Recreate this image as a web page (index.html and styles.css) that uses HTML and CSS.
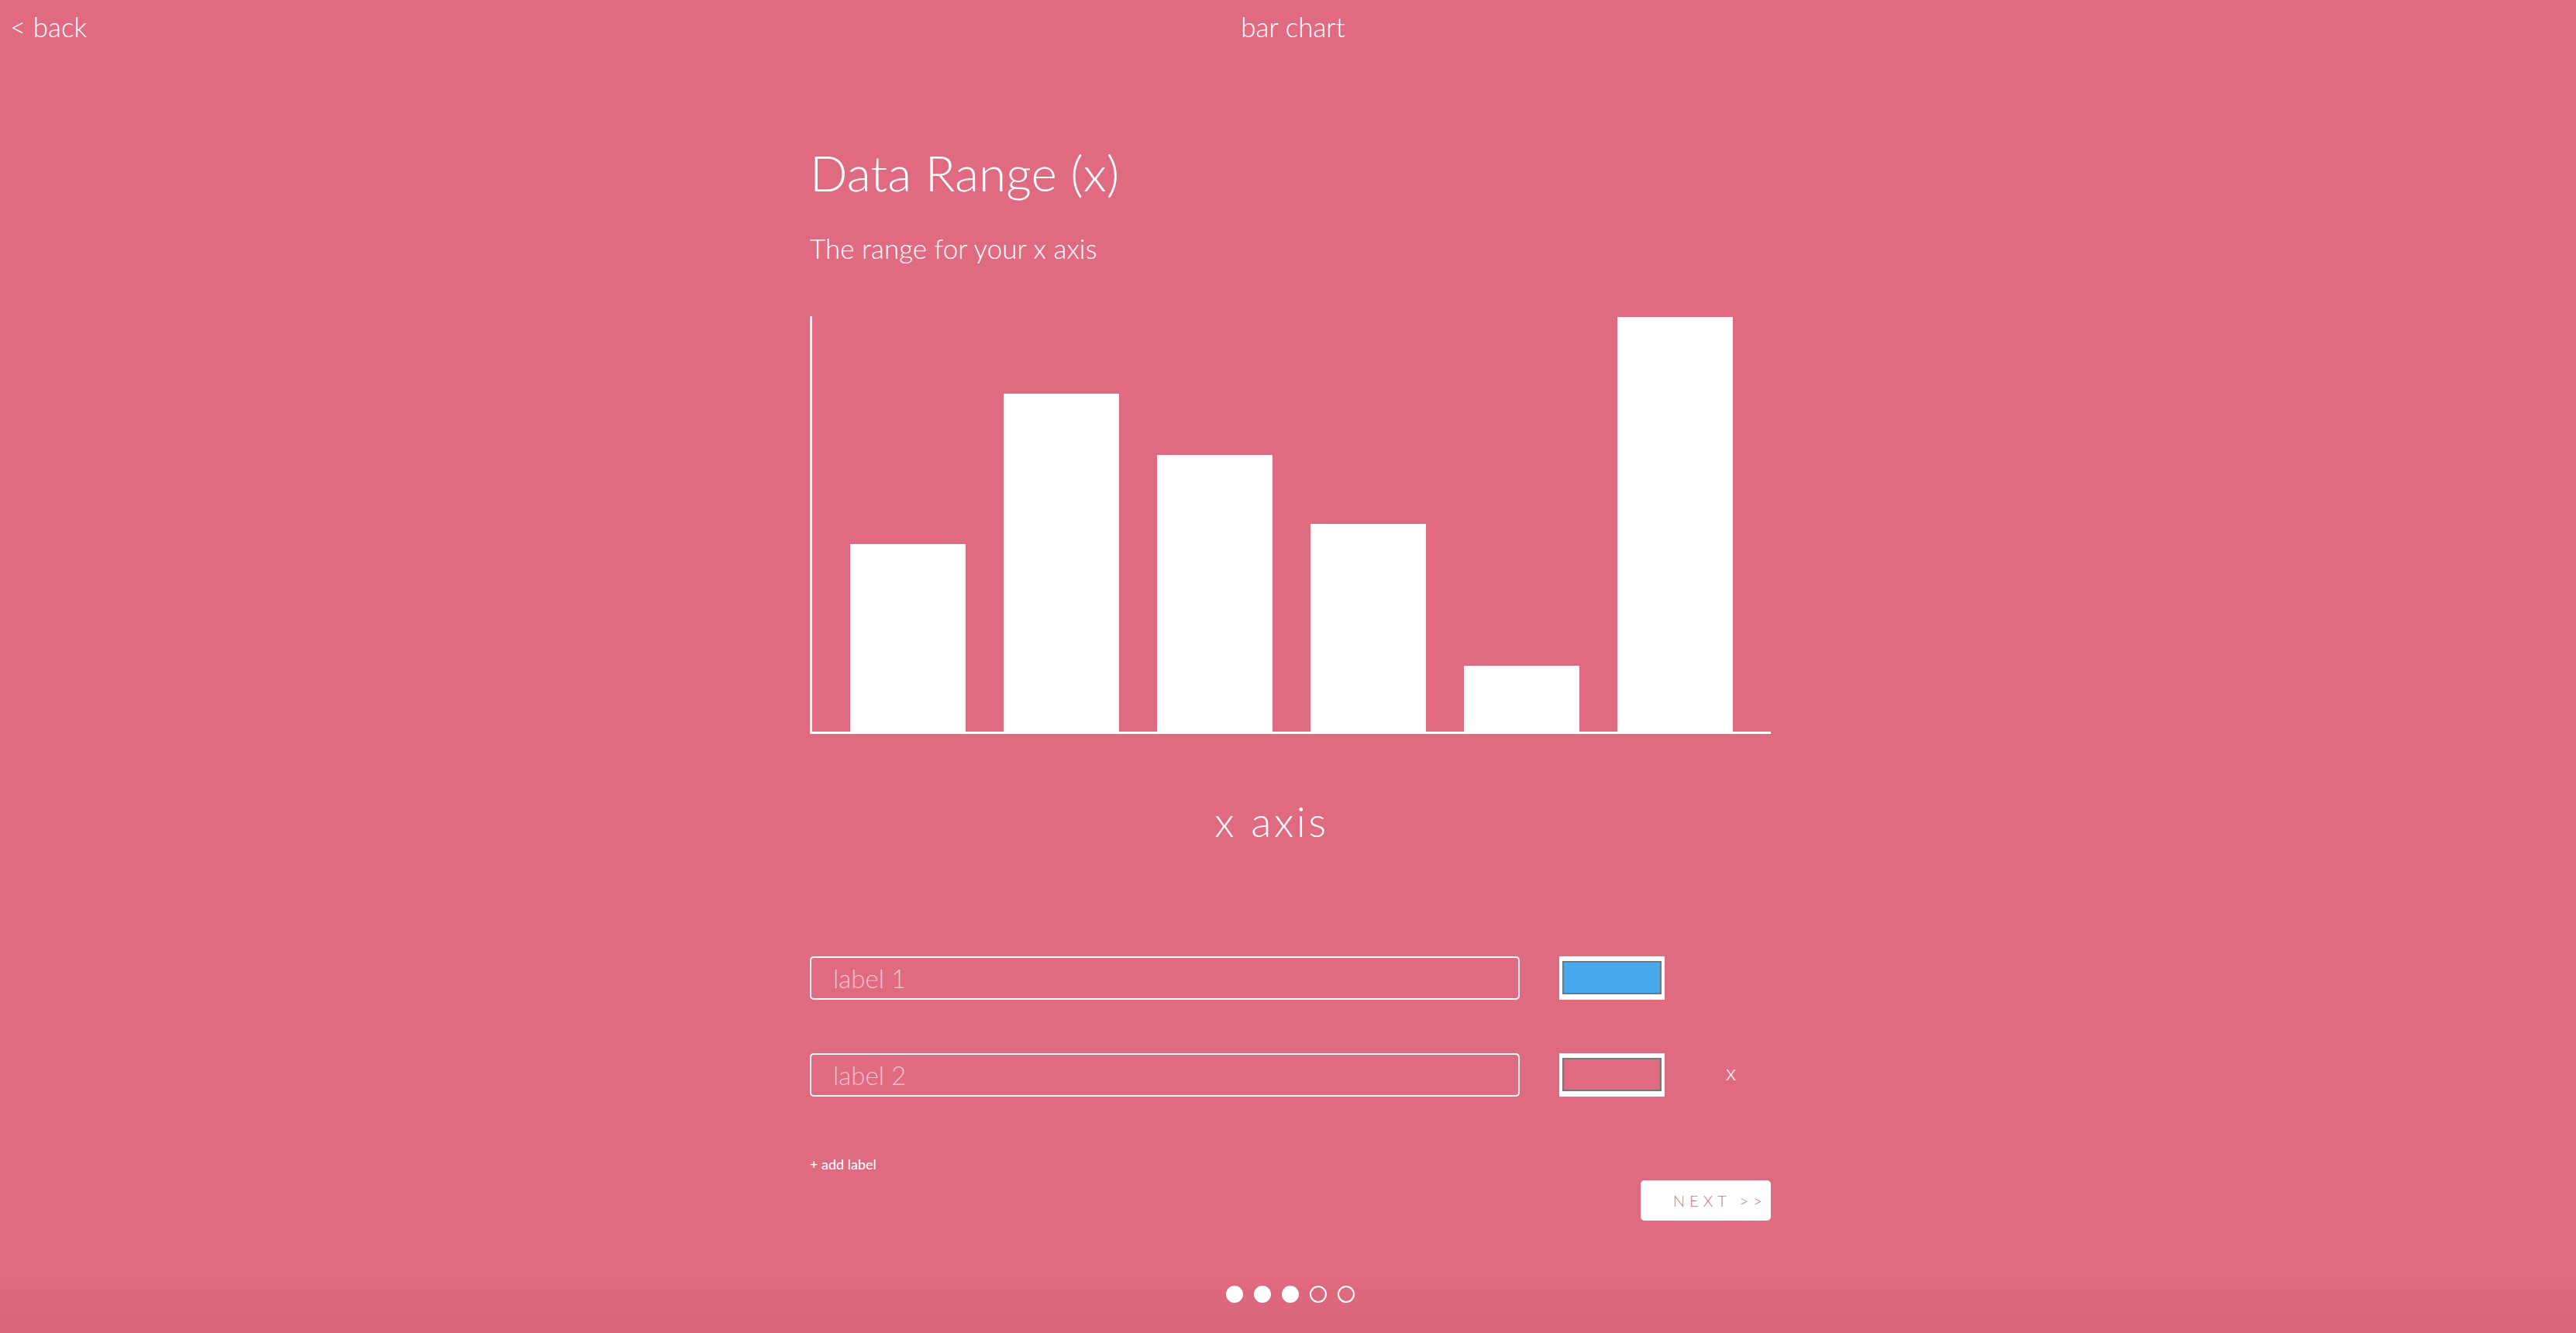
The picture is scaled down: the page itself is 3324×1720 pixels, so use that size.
FILE: index.html
```html
<!DOCTYPE html>
<html lang="en">
<head>
<meta charset="utf-8">
<title>bar chart</title>
<link rel="stylesheet" href="styles.css">
</head>
<body>
<header class="topbar">
  <a class="back">&lt; back</a>
  <div class="page-title">bar chart</div>
  <div class="spacer"></div>
</header>
<main class="wizard">
  <h1 class="step-title">Data Range (x)</h1>
  <p class="step-desc">The range for your x axis</p>
  <div class="chart">
    <div class="bar" style="height:242px"></div>
    <div class="bar" style="height:436px"></div>
    <div class="bar" style="height:357px"></div>
    <div class="bar" style="height:268px"></div>
    <div class="bar" style="height:85px"></div>
    <div class="bar" style="height:535px"></div>
  </div>
  <div class="axis-label">x axis</div>
  <div class="labels">
    <div class="label-row">
      <input class="label-input" type="text" placeholder="label 1">
      <div class="swatch"><span class="swatch-fill swatch-blue"></span></div>
    </div>
    <div class="label-row">
      <input class="label-input" type="text" placeholder="label 2">
      <div class="swatch"><span class="swatch-fill"></span></div>
      <span class="remove">x</span>
    </div>
  </div>
  <a class="add-label">+ add label</a>
  <div class="actions"><button class="next">NEXT &gt;&gt;</button></div>
</main>
<nav class="dots">
  <span class="dot dot-on"></span>
  <span class="dot dot-on"></span>
  <span class="dot dot-on"></span>
  <span class="dot"></span>
  <span class="dot"></span>
</nav>
</body>
</html>
```
FILE: styles.css
```css
* { box-sizing: border-box; }
html, body { margin: 0; height: 1720px; overflow: hidden; }
body {
  padding-left: 6px;
  background: linear-gradient(to bottom, #e06a80 0, #e06a80 1650px, #d8657a 1720px);
  color: #fff;
  font-family: "Lato", "Open Sans", sans-serif;
  font-weight: 300;
}
.topbar {
  display: grid;
  grid-template-columns: 1fr auto 1fr;
  height: 68px;
  line-height: 68px;
  font-size: 35px;
  padding-left: 7px;
}
.back { color: #fff; }
.page-title { text-align: center; }
.wizard {
  width: 1240px;
  margin: 0 auto;
  display: flex;
  flex-direction: column;
}
.step-title {
  margin: 115px 0 0;
  font-size: 64px;
  font-weight: 300;
  line-height: 80px;
}
.step-desc {
  margin: 35px 0 0;
  font-size: 35px;
  line-height: 44px;
}
.chart {
  margin-top: 66px;
  height: 539px;
  border-left: 3px solid #fff;
  border-bottom: 3px solid #fff;
  display: flex;
  align-items: flex-end;
  gap: 49px;
  padding-left: 49px;
}
.bar { width: 149px; background: #fff; }
.axis-label {
  width: 1192px;
  margin-top: 78px;
  text-align: center;
  font-size: 54px;
  line-height: 70px;
  letter-spacing: 3.5px;
}
.labels {
  margin-top: 139px;
  display: flex;
  flex-direction: column;
  gap: 69px;
}
.label-row { display: flex; align-items: center; height: 56px; }
.label-input {
  width: 916px;
  height: 56px;
  border: 2px solid #fff;
  border-radius: 5px;
  background: transparent;
  padding: 0 0 0 28px;
  font-family: inherit;
  font-weight: 300;
  font-size: 33px;
  color: #fff;
  outline: none;
}
.label-input::placeholder { color: rgba(255,255,255,0.6); }
.swatch {
  margin-left: 51px;
  width: 136px;
  height: 56px;
  background: #fff;
  padding: 6px 4px 7px 4px;
  display: flex;
}
.swatch-fill { flex: 1; border: 2px solid #767676; background: #e06a80; }
.swatch-blue { background: #47a9ec; }
.remove { margin-left: 79px; font-size: 28px; line-height: 1; padding-bottom: 8px; }
.add-label {
  margin-top: 75px;
  font-size: 18px;
  line-height: 24px;
  font-weight: 400;
}
.actions { display: flex; justify-content: flex-end; margin-top: 9px; }
.next {
  width: 168px;
  height: 52px;
  border: 0;
  border-radius: 5px;
  background: #fff;
  color: #e06a80;
  font-family: inherit;
  font-weight: 300;
  font-size: 20px;
  letter-spacing: 6px;
  padding: 0 0 0 42px;
  text-align: left;
}
.dots {
  display: flex;
  justify-content: center;
  gap: 14px;
  margin-top: 84px;
}
.dot {
  width: 22px;
  height: 22px;
  border-radius: 50%;
  border: 2px solid #fff;
}
.dot-on { background: #fff; }
```
